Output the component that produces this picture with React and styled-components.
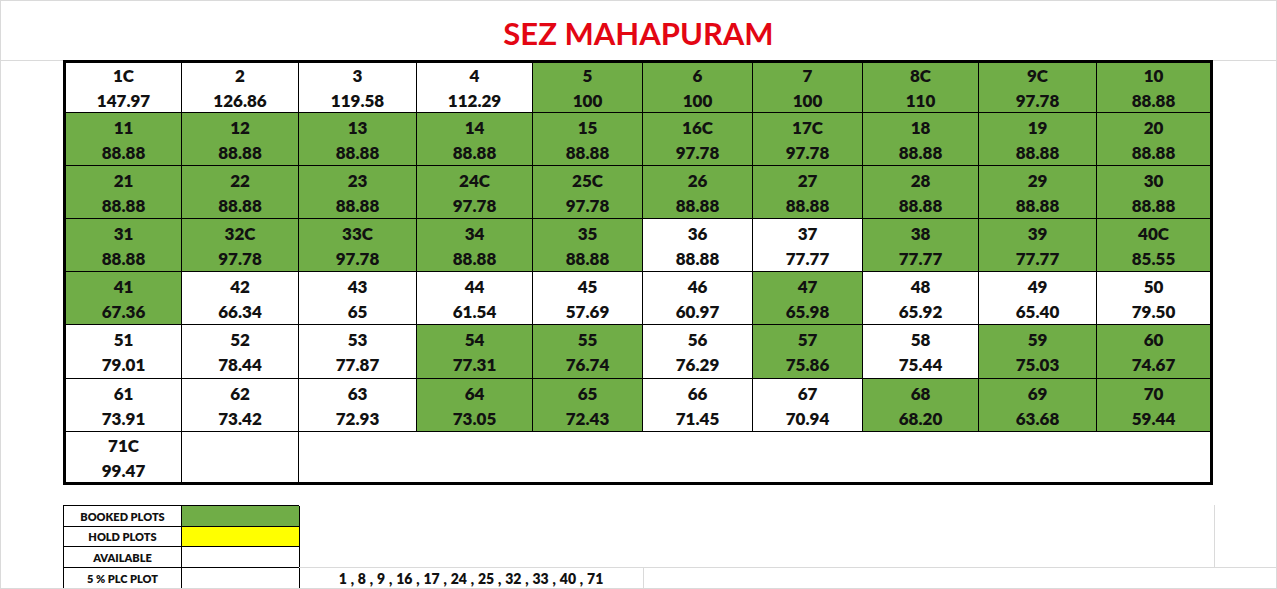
import React from "react";
import styled, { createGlobalStyle } from "styled-components";

const colors = {
  booked: "#70ad47",
  hold: "#ffff00",
  free: "#ffffff",
  ink: "#111111",
  grid: "#dadada",
  title: "#e30613",
};

const GlobalStyle = createGlobalStyle`
  html, body {
    margin: 0;
    padding: 0;
    background: #ffffff;
  }
  * {
    box-sizing: border-box;
  }
`;

// plots laid out row by row; third item marks a booked (green) plot
const plots = [
  ["1C", "147.97"], ["2", "126.86"], ["3", "119.58"], ["4", "112.29"], ["5", "100", 1],
  ["6", "100", 1], ["7", "100", 1], ["8C", "110", 1], ["9C", "97.78", 1], ["10", "88.88", 1],
  ["11", "88.88", 1], ["12", "88.88", 1], ["13", "88.88", 1], ["14", "88.88", 1], ["15", "88.88", 1],
  ["16C", "97.78", 1], ["17C", "97.78", 1], ["18", "88.88", 1], ["19", "88.88", 1], ["20", "88.88", 1],
  ["21", "88.88", 1], ["22", "88.88", 1], ["23", "88.88", 1], ["24C", "97.78", 1], ["25C", "97.78", 1],
  ["26", "88.88", 1], ["27", "88.88", 1], ["28", "88.88", 1], ["29", "88.88", 1], ["30", "88.88", 1],
  ["31", "88.88", 1], ["32C", "97.78", 1], ["33C", "97.78", 1], ["34", "88.88", 1], ["35", "88.88", 1],
  ["36", "88.88"], ["37", "77.77"], ["38", "77.77", 1], ["39", "77.77", 1], ["40C", "85.55", 1],
  ["41", "67.36", 1], ["42", "66.34"], ["43", "65"], ["44", "61.54"], ["45", "57.69"],
  ["46", "60.97"], ["47", "65.98", 1], ["48", "65.92"], ["49", "65.40"], ["50", "79.50"],
  ["51", "79.01"], ["52", "78.44"], ["53", "77.87"], ["54", "77.31", 1], ["55", "76.74", 1],
  ["56", "76.29"], ["57", "75.86", 1], ["58", "75.44"], ["59", "75.03", 1], ["60", "74.67", 1],
  ["61", "73.91"], ["62", "73.42"], ["63", "72.93"], ["64", "73.05", 1], ["65", "72.43", 1],
  ["66", "71.45"], ["67", "70.94"], ["68", "68.20", 1], ["69", "63.68", 1], ["70", "59.44", 1],
  ["71C", "99.47"],
];

const legend = [
  { label: "BOOKED PLOTS", color: colors.booked },
  { label: "HOLD PLOTS", color: colors.hold },
  { label: "AVAILABLE", color: colors.free },
  { label: "5 % PLC PLOT", color: colors.free },
];

export default function App() {
  return (
    <>
      <GlobalStyle />
      <Sheet>
        <Header>
          <Title>SEZ MAHAPURAM</Title>
        </Header>
        <Body>
          <PlotGrid>
            {plots.map(([no, area, booked]) => (
              <Plot key={no} $booked={!!booked}>
                <span>{no}</span>
                <span>{area}</span>
              </Plot>
            ))}
            <Plot />
            <Plot $span={8} />
          </PlotGrid>
        </Body>
        <LegendArea>
          <LegendTable>
            {legend.map((l) => (
              <React.Fragment key={l.label}>
                <LegendLabel>{l.label}</LegendLabel>
                <LegendSwatch $color={l.color} />
              </React.Fragment>
            ))}
          </LegendTable>
          <Notes>
            <NotesBlank />
            <NotesRow>
              <PlcList>1 , 8 , 9 , 16 , 17 , 24 , 25 , 32 , 33 , 40 , 71</PlcList>
            </NotesRow>
          </Notes>
        </LegendArea>
      </Sheet>
    </>
  );
}

const Sheet = styled.div`
  width: 1277px;
  height: 589px;
  border: 1px solid ${colors.grid};
  background: #fff;
  overflow: hidden;
  font-family: Lato, "Liberation Sans", sans-serif;
  font-weight: 700;
  color: ${colors.ink};
  display: flex;
  flex-direction: column;
`;

const Header = styled.header`
  flex-shrink: 0;
  height: 60px;
  border-bottom: 1px solid ${colors.grid};
  display: flex;
  align-items: center;
  justify-content: center;
  padding-top: 4px;
`;

const Title = styled.h1`
  margin: 0;
  font-size: 31px;
  font-weight: 700;
  color: ${colors.title};
`;

const Body = styled.div`
  flex-shrink: 0;
  padding-left: 62px;
  margin-top: -1px;
`;

const PlotGrid = styled.div`
  width: 1150px;
  display: grid;
  grid-template-columns: 115px 116px 117px 115px 109px 109px 109px 115px 117px 113px;
  grid-template-rows: 49px 52px 52px 52px 52px 53px 52px 50px;
  gap: 1px;
  background: #000;
  border: 3px solid #000;
`;

const Plot = styled.div`
  grid-column: ${(p) => (p.$span ? `span ${p.$span}` : "auto")};
  background: ${(p) => (p.$booked ? colors.booked : colors.free)};
  display: flex;
  flex-direction: column;
  align-items: center;
  justify-content: center;
  padding-top: 1px;
  font-size: 17px;
  font-weight: 800;
  line-height: 25px;
`;

const LegendArea = styled.div`
  margin-top: 20px;
  display: flex;
  flex: 1;
  min-height: 0;
`;

const LegendTable = styled.div`
  margin-left: 62px;
  width: 236px;
  display: grid;
  grid-template-columns: 118px 118px;
  grid-template-rows: 21px 20px 21px 22px;
  border-top: 1px solid #000;
  border-left: 1px solid #000;
`;

const LegendLabel = styled.div`
  border-right: 1px solid #000;
  border-bottom: 1px solid #000;
  font-size: 11px;
  font-weight: 800;
  display: flex;
  align-items: center;
  justify-content: center;
`;

const LegendSwatch = styled.div`
  background: ${(p) => p.$color};
  border-right: 1px solid #000;
  border-bottom: 1px solid #000;
`;

const Notes = styled.div`
  flex: 1;
  display: flex;
  flex-direction: column;
`;

const NotesBlank = styled.div`
  width: 916px;
  height: 62px;
  flex-shrink: 0;
  border-right: 1px solid ${colors.grid};
`;

const NotesRow = styled.div`
  flex: 1;
  border-top: 1px solid ${colors.grid};
  display: flex;
`;

const PlcList = styled.div`
  width: 345px;
  border-right: 1px solid ${colors.grid};
  font-size: 14px;
  font-weight: 800;
  word-spacing: 0.6px;
  display: flex;
  align-items: center;
  justify-content: center;
`;
